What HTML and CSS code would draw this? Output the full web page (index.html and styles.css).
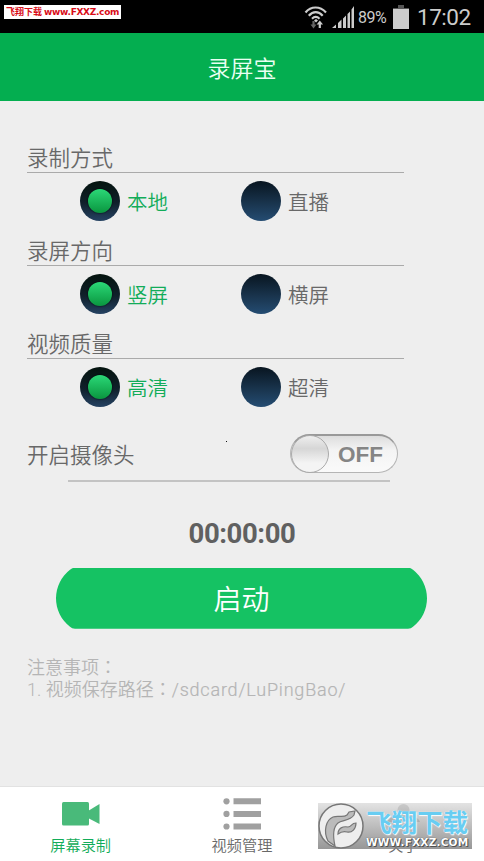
FILE: index.html
```html
<!DOCTYPE html>
<html lang="zh-CN">
<head>
<meta charset="utf-8">
<title>录屏宝</title>
<link rel="stylesheet" href="styles.css">
</head>
<body>
<div class="phone">
  <div class="status">
    <span class="site-tag">飞翔下载 <b>www.FXXZ.com</b></span>
    <svg class="wifi" width="24" height="24" viewBox="0 0 24 24" fill="none" stroke="#ccc" stroke-width="2.2">
      <path d="M1.5 7.5C7 .8 16 .8 22 7.500M4.800 10.800C9 6 14.500 6 18.700 10.800M8 13.800C10.500 11.300 13 11.300 15.500 13.800"/>
      <path d="M10 15.500L12 14L14 15.500L12 17.500Z" fill="#ccc" stroke="none"/>
      <path d="M9.500 16V20.500" stroke="#666"/><path d="M6.500 19.500H12.500L9.500 23.500Z" fill="#666" stroke="none"/>
      <path d="M15.800 18V23"/><path d="M12.700 19.500L15.800 15.500L19 19.500Z" fill="#ccc" stroke="none"/>
    </svg>
    <svg class="signal" width="23" height="22" viewBox="0 0 23 22" fill="#ccc">
      <path d="M0 22L4 18.500V22ZM6 17L9.500 13.500V22H6ZM11 12.500L14 9.500V22H11ZM15.500 8L18 5.500V22H15.500ZM19.500 3.500L22 0V22H19.500Z"/>
    </svg>
    <span class="percent">89%</span>
    <svg class="battery" width="16" height="24" viewBox="0 0 16 24"><path d="M5 0H11V3H16V5H0V3H5Z" fill="#555"/><path d="M0 4H16V24H0Z" fill="#ccc"/></svg>
    <span class="clock">17:02</span>
  </div>
  <header class="title">录屏宝</header>
  <main class="main">
    <section class="group">
      <h2>录制方式</h2>
      <div class="options">
        <label class="option on"><i class="radio"></i><span>本地</span></label>
        <label class="option"><i class="radio"></i><span>直播</span></label>
      </div>
    </section>
    <section class="group">
      <h2>录屏方向</h2>
      <div class="options">
        <label class="option on"><i class="radio"></i><span>竖屏</span></label>
        <label class="option"><i class="radio"></i><span>横屏</span></label>
      </div>
    </section>
    <section class="group">
      <h2>视频质量</h2>
      <div class="options">
        <label class="option on"><i class="radio"></i><span>高清</span></label>
        <label class="option"><i class="radio"></i><span>超清</span></label>
      </div>
    </section>
    <div class="camera">
      <span>开启摄像头</span>
      <i class="speck"></i>
      <div class="switch"><i class="knob"></i><span>OFF</span></div>
    </div>
    <div class="rule"></div>
    <div class="timer">00:00:00</div>
    <button class="start">启动</button>
    <div class="notes">
      <p>注意事项<span class="colon" lang="zh-TW">：</span></p>
      <p>1. 视频保存路径<span class="colon" lang="zh-TW">：</span><span class="path">/sdcard/LuPingBao/</span></p>
    </div>
  </main>
  <nav class="tabs">
    <div class="tab active">
      <svg width="39" height="32" viewBox="0 0 39 32" fill="#49ba7a"><rect x="1" y="4" width="27" height="23.500" rx="1.500"/><path d="M27 13L38.500 6V26L27 20Z"/></svg>
      <span>屏幕录制</span>
    </div>
    <div class="tab">
      <svg width="39" height="32" viewBox="0 0 39 32" fill="#a0a0a0"><circle cx="4.500" cy="3.300" r="3.100"/><circle cx="4.500" cy="15.900" r="3.100"/><circle cx="4.500" cy="28.500" r="3.100"/><path d="M11.500 .3H39V6.300H11.500ZM11.500 12.900H39V18.900H11.500ZM11.500 25.500H39V31.500H11.500Z"/></svg>
      <span>视频管理</span>
    </div>
    <div class="tab">
      <svg width="39" height="32" viewBox="0 0 39 32" fill="#888"><circle cx="19.500" cy="12" r="6"/><path d="M3 24C6 14 33 14 36 24Z"/></svg>
      <span>关于</span>
    </div>
    <div class="watermark">
      <svg width="46" height="46" viewBox="0 0 46 46">
        <circle cx="23" cy="23" r="22" fill="#eee" stroke="#777" stroke-width="1.500"/>
        <path d="M10 38C5 28 8 17 15 14C20 12 25 15 29 12L31 9L37 8L36 12C32 18 24 17 20 20C14 25 15 34 17 43Z" fill="#bbb" stroke="#777" stroke-width="1.200"/>
        <path d="M20 31C20 25 25 23 30 24C34 24 33 20 38 20C38 26 34 30 29 29C26 28 24 28 20 31Z" fill="#bbb" stroke="#777" stroke-width="1.200"/>
      </svg>
      <div class="wm-text"><b>飞翔下载</b><span>WWW.FXXZ.COM</span></div>
    </div>
  </nav>
</div>
</body>
</html>
```
FILE: styles.css
```css
* { box-sizing: border-box; }
body { margin: 0; }
.phone {
  width: 484px; height: 861px; display: flex; flex-direction: column;
  background: #eee; color: #686868; overflow: hidden;
  font-family: Roboto, "Noto Sans CJK SC", sans-serif; font-weight: 350;
}
.status { height: 33px; flex: none; background: #000; color: #ccc; display: flex; align-items: center; }
.site-tag {
  width: 117px; height: 14px; margin: -9px 183px 0 4px; padding-left: 2px; background: #fff; color: #d80c18;
  font: 700 9px/14px "Noto Sans CJK SC", sans-serif; white-space: nowrap;
}
.site-tag b { font: 700 9px/14px "DejaVu Sans", sans-serif; letter-spacing: -.3px; }
.wifi { flex: none; }
.signal { flex: none; margin: 0 3px 0 4px; }
.percent { width: 30px; font-size: 16px; font-weight: 400; letter-spacing: -.5px; padding-top: 2px; }
.battery { flex: none; margin: 0 8px 0 5px; }
.clock { font-size: 22.500px; font-weight: 400; white-space: nowrap; letter-spacing: -.5px; }
.title { height: 68px; flex: none; background: #04ae50; color: #eafff2; text-align: center; font-size: 23px; line-height: 74px; }
.main { flex: 1; padding-top: 43px; }
.group { width: 377px; height: 93px; margin-left: 27px; }
.group + .group { height: 93.400px; }
.group h2 { margin: 0; height: 28.500px; border-bottom: 1px solid #aaa; font-size: 21.500px; font-weight: 350; line-height: 30px; }
.options { display: grid; grid-template-columns: 161px 161px; padding: 8.500px 0 0 53.400px; }
.option { display: flex; align-items: center; gap: 6.500px; height: 40px; font-size: 20.500px; line-height: 36px; }
.option span { padding-top: 4px; }
.on { color: #12ac59; }
.radio { width: 40px; height: 40px; border-radius: 50%; background: linear-gradient(#081520, #19344d 55%, #244c72); display: flex; align-items: center; justify-content: center; }
.on .radio { background: linear-gradient(#04130e, #10202b 55%, #254262); }
.on .radio::after { content: ""; width: 24px; height: 24px; border-radius: 50%; background: linear-gradient(#2bd877, #0a963f); box-shadow: 0 0 2px #000; }
.camera { height: 58px; margin: 1px 86px 0 27px; display: flex; justify-content: space-between; align-items: center; font-size: 21.500px; position: relative; }
.speck { position: absolute; left: 199px; top: 16px; width: 1px; height: 1px; background: #111; }
.switch {
  width: 108px; height: 39px; border-radius: 20px; border: 1px solid #b5b5b5; border-top: 2px solid #999;
  background: linear-gradient(#ddd, #f4f4f4 40%, #fafafa); display: flex; align-items: center; gap: 9px;
}
.knob { width: 38px; height: 38px; flex: none; border-radius: 50%; border: 1.500px solid #aaa; background: linear-gradient(#eee, #d6d6d6 35%, #f4f4f4 75%); }
.switch span { color: #858585; font: 700 22.500px/34px "Liberation Sans", sans-serif; padding-top: 2px; }
.rule { height: 2px; margin: -3px 94px 0 68px; background: #c3c3c3; }
.timer { height: 40px; margin-top: 32px; color: #606060; font-size: 27.500px; font-weight: 700; line-height: 40px; text-align: center; letter-spacing: -.4px; }
.start {
  display: block; width: 371px; height: 61px; margin: 14px 0 0 56px; padding: 0; border: 0;
  background: #15c263; color: #fff; font: inherit; font-size: 28px;
  clip-path: path("M19 0H352Q355 0 357 2A36 36 0 0 1 357 59Q355 61 352 61H19Q16 61 14 59A36 36 0 0 1 14 2Q16 0 19 0Z");
}
.notes { margin: 28px 0 0 27px; color: #b5b5b5; font-size: 18px; }
.notes p { margin: 0; height: 22px; line-height: 22px; white-space: nowrap; }
.colon { font-family: "Noto Sans CJK TC", sans-serif; line-height: 1; }
.path { letter-spacing: .8px; -webkit-text-stroke: .2px #b5b5b5; }
.tabs { height: 75px; flex: none; background: #fff; border-top: 1px solid #e2e2e2; display: grid; grid-template-columns: repeat(3, 1fr); position: relative; }
.tab { display: flex; flex-direction: column; align-items: center; padding-top: 11px; font-size: 15.200px; line-height: 33px; }
.tab svg { flex: none; }
.active { color: #12ac59; }
.watermark {
  position: absolute; left: 318px; top: 16px; width: 154px; height: 46px; display: flex; gap: 2px;
  background: linear-gradient(rgba(220,220,220,.8), rgba(125,125,125,.8));
}
.watermark svg { flex: none; }
.wm-text { display: flex; flex-direction: column; padding-top: 1px; }
.wm-text b { font: 700 25.500px/33px "Noto Sans CJK SC", sans-serif; color: #68cdf2; text-shadow: 0 0 1px #fff, 1px 1px 1px #fff; white-space: nowrap; }
.wm-text span { font: 700 10.500px/10px "DejaVu Sans", sans-serif; color: #fff; letter-spacing: .2px; white-space: nowrap; text-shadow: 0 0 1px #333, 1px 1px 0 #555; }
```
